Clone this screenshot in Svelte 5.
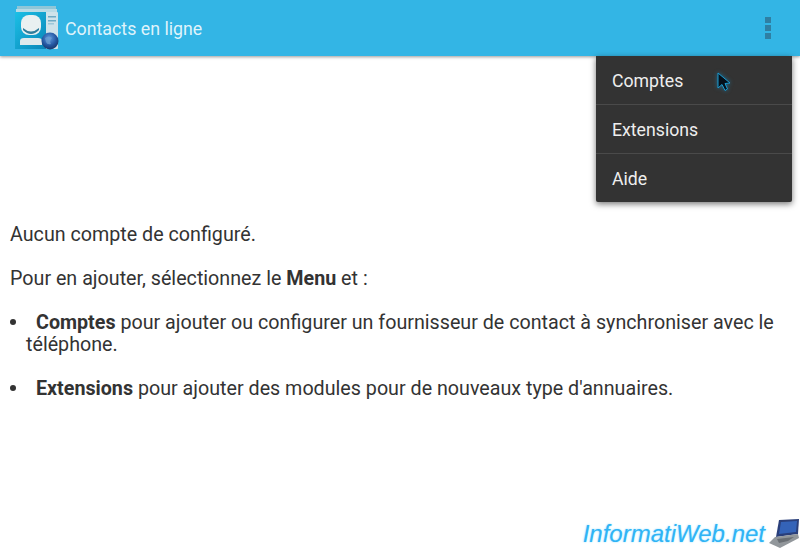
<script>
	const menuItems = ['Comptes', 'Extensions', 'Aide'];
</script>

<div class="screen">
	<header class="action-bar">
		<svg class="app-icon" width="46" height="44" viewBox="0 0 46 44">
			<defs>
				<linearGradient id="card" x1="0" y1="0" x2="1" y2="1">
					<stop offset="0" stop-color="#1cc0e6" />
					<stop offset="1" stop-color="#0a86b8" />
				</linearGradient>
				<radialGradient id="globe" cx="0.45" cy="0.35" r="0.7">
					<stop offset="0" stop-color="#5f9be0" />
					<stop offset="0.6" stop-color="#23559f" />
					<stop offset="1" stop-color="#17305f" />
				</radialGradient>
			</defs>
			<rect x="3" y="0" width="39" height="3" fill="#8fc6d8" />
			<rect x="2" y="3" width="41" height="3" fill="#b9dbe6" />
			<rect x="1" y="6" width="43" height="37" rx="1" fill="#cfe3ea" />
			<rect x="1" y="6" width="31" height="37" fill="url(#card)" />
			<rect x="34" y="10" width="8" height="1.5" fill="#6faac4" />
			<rect x="34" y="14" width="8" height="1.5" fill="#6faac4" />
			<rect x="34" y="17" width="6" height="1.5" fill="#9cc8da" />
			<rect x="7" y="9" width="20" height="20" rx="8" fill="#e9f0f1" />
			<path d="M9 22 Q17 29 25 22 L25 24 Q17 32 9 24 Z" fill="#2f7d9c" />
			<path d="M6 39 V35 Q6 32 10 32 H24 Q28 32 28 35 V39 Z" fill="#dfe9ec" />
			<circle cx="36" cy="35" r="8.5" fill="url(#globe)" />
			<path d="M31 32 Q35 29 38 32 Q35 35 37 38 Q33 39 32 36 Z" fill="#6f9fd0" opacity="0.7" />
		</svg>
		<span class="title">Contacts en ligne</span>
		<div class="overflow">
			<i></i>
			<i></i>
			<i></i>
		</div>
	</header>

	<main class="content">
		<p>Aucun compte de configuré.</p>
		<p>Pour en ajouter, sélectionnez le <b>Menu</b> et :</p>
		<ul>
			<li><b>Comptes</b> pour ajouter ou configurer un fournisseur de contact à synchroniser avec le téléphone.</li>
			<li><b>Extensions</b> pour ajouter des modules pour de nouveaux type d'annuaires.</li>
		</ul>
	</main>

	<div class="menu">
		{#each menuItems as item}
			<div class="menu-item">{item}</div>
		{/each}
	</div>

	<svg class="cursor" width="18" height="24" viewBox="0 0 18 24">
		<path d="M2 2 L2 17 L6 13.5 L9 19.5 L11.5 18 L9 12.5 L14 12 Z" fill="#05101a" stroke="#1a9ad0" stroke-width="1" />
	</svg>

	<div class="watermark">
		<span>InformatiWeb.net</span>
		<svg width="32" height="30" viewBox="0 0 32 30">
			<path d="M11 1 L31 0 L30 15 L8 18 Z" fill="#2a3f7a" />
			<path d="M13 3 L29 2 L28 13 L11 15 Z" fill="#3463b8" />
			<path d="M7 18 L30 15 L31 19 L12 29 L1 24 Z" fill="#92979b" />
			<path d="M9 20 L26 18 L20 22 L11 24 Z" fill="#6a6f74" />
		</svg>
	</div>
</div>

<style>
	:global(body) {
		background: #fff;
	}

	.screen {
		position: relative;
		width: 800px;
		height: 552px;
		overflow: hidden;
		font-family: Roboto, sans-serif;
		color: #333;
	}

	.action-bar {
		height: 56px;
		background: #33b5e5;
		box-shadow: 0 1px 3px rgba(0, 0, 0, 0.4);
		display: flex;
		align-items: center;
		padding-left: 14px;
		padding-right: 29px;
		box-sizing: border-box;
	}

	.app-icon {
		flex: none;
		margin-right: 5px;
	}

	.title {
		flex: 1;
		font-size: 17.8px;
		color: #dff3fb;
	}

	.overflow {
		display: flex;
		flex-direction: column;
		gap: 2px;
	}

	.overflow i {
		display: block;
		width: 6px;
		height: 6px;
		background: #2f7fa3;
	}

	.content {
		padding: 168px 0 0 10px;
		font-size: 19.7px;
		line-height: 22px;
		color: #333;
	}

	.content p {
		margin: 0 0 22px;
	}

	.content b {
		font-weight: 700;
	}

	ul {
		list-style: none;
		margin: 0;
		padding: 0 0 0 16px;
	}

	li {
		margin-bottom: 22px;
		text-indent: -16px;
	}

	li::before {
		content: '';
		display: inline-block;
		width: 6px;
		height: 6px;
		margin-right: 20px;
		border-radius: 50%;
		background: #333;
		vertical-align: 4px;
	}

	.menu {
		position: absolute;
		top: 56px;
		left: 596px;
		width: 196px;
		background: #333;
		border-radius: 0 0 2px 2px;
		box-shadow: 0 2px 6px rgba(0, 0, 0, 0.55);
	}

	.menu-item {
		height: 48px;
		line-height: 50px;
		padding-left: 16px;
		font-size: 17.7px;
		color: #eee;
		border-bottom: 1px solid #4a4a4a;
	}

	.menu-item:last-child {
		border-bottom: none;
	}

	.cursor {
		position: absolute;
		left: 716px;
		top: 71px;
		filter: drop-shadow(0 0 2px rgba(20, 150, 210, 0.6));
	}

	.watermark {
		position: absolute;
		right: 0;
		bottom: 3px;
		display: flex;
		align-items: center;
		gap: 3px;
	}

	.watermark span {
		font-family: 'Liberation Sans', Arial, sans-serif;
		font-style: italic;
		font-size: 24px;
		color: #2fb4f5;
		text-shadow: 0 0 2px #8fdcff;
	}
</style>
